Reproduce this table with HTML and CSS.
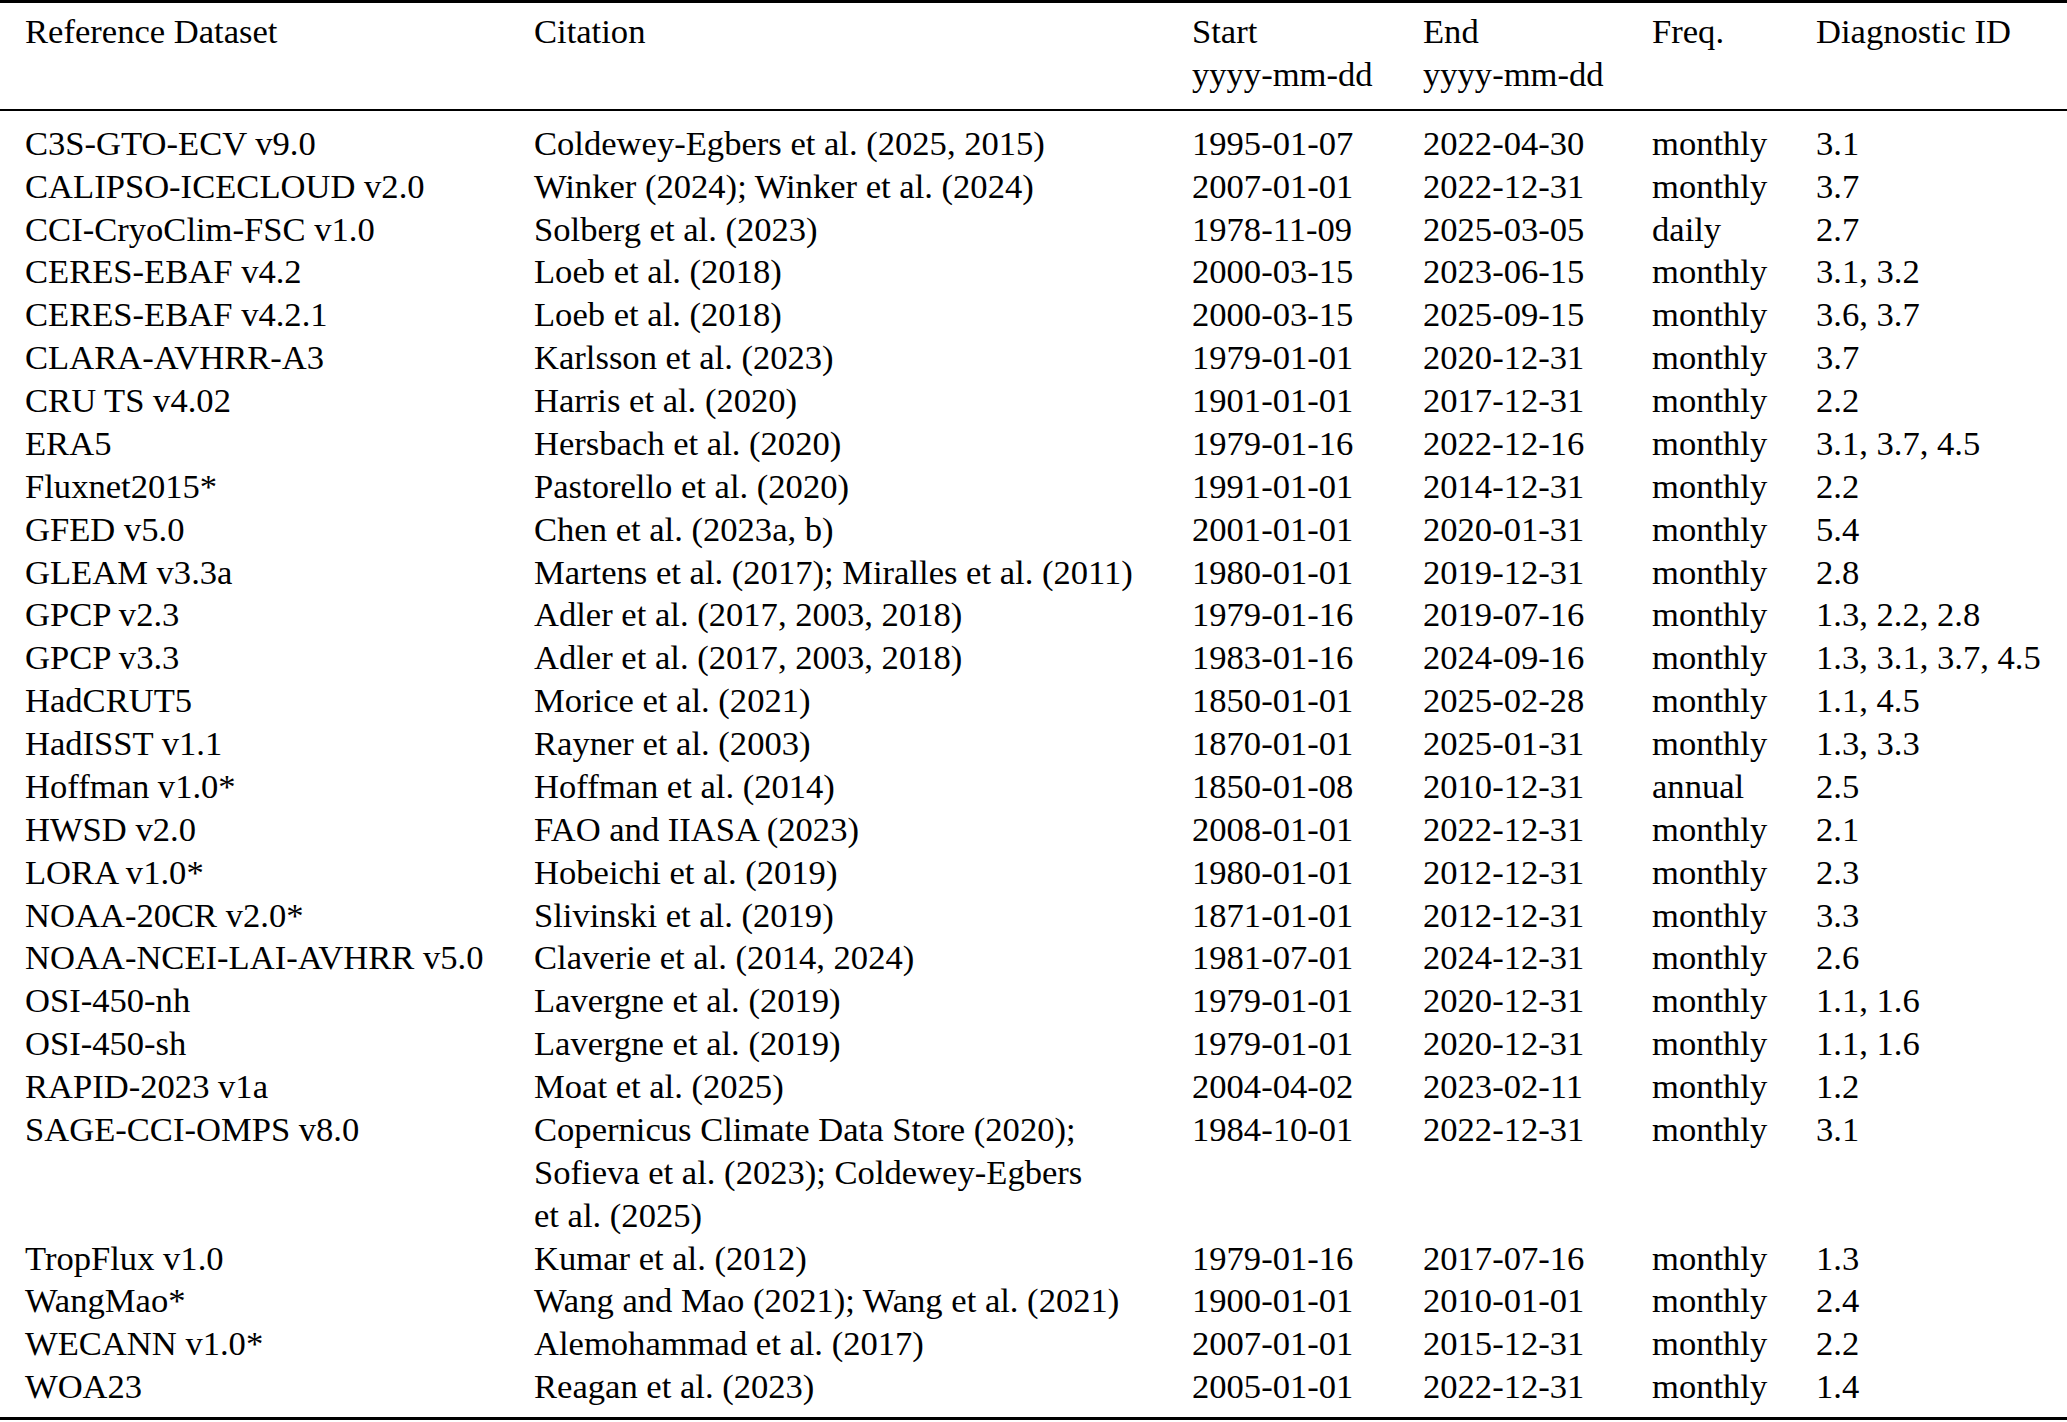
FILE: index.html
```html
<!DOCTYPE html>
<html lang="en">
<head>
<meta charset="utf-8">
<title>Reference datasets</title>
<link rel="stylesheet" href="styles.css">
</head>
<body>
<div class="tbl">
  <div class="head row">
    <div>Reference Dataset</div>
    <div>Citation</div>
    <div>Start<br>yyyy-mm-dd</div>
    <div>End<br>yyyy-mm-dd</div>
    <div>Freq.</div>
    <div>Diagnostic ID</div>
  </div>
  <div class="body">
    <div class="row"><div>C3S-GTO-ECV v9.0</div><div class="cite">Coldewey-Egbers et al. (2025, 2015)</div><div>1995-01-07</div><div>2022-04-30</div><div>monthly</div><div>3.1</div></div>
    <div class="row"><div>CALIPSO-ICECLOUD v2.0</div><div class="cite">Winker (2024); Winker et al. (2024)</div><div>2007-01-01</div><div>2022-12-31</div><div>monthly</div><div>3.7</div></div>
    <div class="row"><div>CCI-CryoClim-FSC v1.0</div><div class="cite">Solberg et al. (2023)</div><div>1978-11-09</div><div>2025-03-05</div><div>daily</div><div>2.7</div></div>
    <div class="row"><div>CERES-EBAF v4.2</div><div class="cite">Loeb et al. (2018)</div><div>2000-03-15</div><div>2023-06-15</div><div>monthly</div><div>3.1, 3.2</div></div>
    <div class="row"><div>CERES-EBAF v4.2.1</div><div class="cite">Loeb et al. (2018)</div><div>2000-03-15</div><div>2025-09-15</div><div>monthly</div><div>3.6, 3.7</div></div>
    <div class="row"><div>CLARA-AVHRR-A3</div><div class="cite">Karlsson et al. (2023)</div><div>1979-01-01</div><div>2020-12-31</div><div>monthly</div><div>3.7</div></div>
    <div class="row"><div>CRU TS v4.02</div><div class="cite">Harris et al. (2020)</div><div>1901-01-01</div><div>2017-12-31</div><div>monthly</div><div>2.2</div></div>
    <div class="row"><div>ERA5</div><div class="cite">Hersbach et al. (2020)</div><div>1979-01-16</div><div>2022-12-16</div><div>monthly</div><div>3.1, 3.7, 4.5</div></div>
    <div class="row"><div>Fluxnet2015*</div><div class="cite">Pastorello et al. (2020)</div><div>1991-01-01</div><div>2014-12-31</div><div>monthly</div><div>2.2</div></div>
    <div class="row"><div>GFED v5.0</div><div class="cite">Chen et al. (2023a, b)</div><div>2001-01-01</div><div>2020-01-31</div><div>monthly</div><div>5.4</div></div>
    <div class="row"><div>GLEAM v3.3a</div><div class="cite">Martens et al. (2017); Miralles et al. (2011)</div><div>1980-01-01</div><div>2019-12-31</div><div>monthly</div><div>2.8</div></div>
    <div class="row"><div>GPCP v2.3</div><div class="cite">Adler et al. (2017, 2003, 2018)</div><div>1979-01-16</div><div>2019-07-16</div><div>monthly</div><div>1.3, 2.2, 2.8</div></div>
    <div class="row"><div>GPCP v3.3</div><div class="cite">Adler et al. (2017, 2003, 2018)</div><div>1983-01-16</div><div>2024-09-16</div><div>monthly</div><div>1.3, 3.1, 3.7, 4.5</div></div>
    <div class="row"><div>HadCRUT5</div><div class="cite">Morice et al. (2021)</div><div>1850-01-01</div><div>2025-02-28</div><div>monthly</div><div>1.1, 4.5</div></div>
    <div class="row"><div>HadISST v1.1</div><div class="cite">Rayner et al. (2003)</div><div>1870-01-01</div><div>2025-01-31</div><div>monthly</div><div>1.3, 3.3</div></div>
    <div class="row"><div>Hoffman v1.0*</div><div class="cite">Hoffman et al. (2014)</div><div>1850-01-08</div><div>2010-12-31</div><div>annual</div><div>2.5</div></div>
    <div class="row"><div>HWSD v2.0</div><div class="cite">FAO and IIASA (2023)</div><div>2008-01-01</div><div>2022-12-31</div><div>monthly</div><div>2.1</div></div>
    <div class="row"><div>LORA v1.0*</div><div class="cite">Hobeichi et al. (2019)</div><div>1980-01-01</div><div>2012-12-31</div><div>monthly</div><div>2.3</div></div>
    <div class="row"><div>NOAA-20CR v2.0*</div><div class="cite">Slivinski et al. (2019)</div><div>1871-01-01</div><div>2012-12-31</div><div>monthly</div><div>3.3</div></div>
    <div class="row"><div>NOAA-NCEI-LAI-AVHRR v5.0</div><div class="cite">Claverie et al. (2014, 2024)</div><div>1981-07-01</div><div>2024-12-31</div><div>monthly</div><div>2.6</div></div>
    <div class="row"><div>OSI-450-nh</div><div class="cite">Lavergne et al. (2019)</div><div>1979-01-01</div><div>2020-12-31</div><div>monthly</div><div>1.1, 1.6</div></div>
    <div class="row"><div>OSI-450-sh</div><div class="cite">Lavergne et al. (2019)</div><div>1979-01-01</div><div>2020-12-31</div><div>monthly</div><div>1.1, 1.6</div></div>
    <div class="row"><div>RAPID-2023 v1a</div><div class="cite">Moat et al. (2025)</div><div>2004-04-02</div><div>2023-02-11</div><div>monthly</div><div>1.2</div></div>
    <div class="row"><div>SAGE-CCI-OMPS v8.0</div><div class="cite">Copernicus Climate Data Store (2020); Sofieva et&nbsp;al. (2023); Coldewey-Egbers et&nbsp;al. (2025)</div><div>1984-10-01</div><div>2022-12-31</div><div>monthly</div><div>3.1</div></div>
    <div class="row"><div>TropFlux v1.0</div><div class="cite">Kumar et al. (2012)</div><div>1979-01-16</div><div>2017-07-16</div><div>monthly</div><div>1.3</div></div>
    <div class="row"><div>WangMao*</div><div class="cite">Wang and Mao (2021); Wang et al. (2021)</div><div>1900-01-01</div><div>2010-01-01</div><div>monthly</div><div>2.4</div></div>
    <div class="row"><div>WECANN v1.0*</div><div class="cite">Alemohammad et al. (2017)</div><div>2007-01-01</div><div>2015-12-31</div><div>monthly</div><div>2.2</div></div>
    <div class="row"><div>WOA23</div><div class="cite">Reagan et al. (2023)</div><div>2005-01-01</div><div>2022-12-31</div><div>monthly</div><div>1.4</div></div>
  </div>
</div>
</body>
</html>
```

FILE: styles.css
```css
html, body {
  margin: 0;
  padding: 0;
  background: #ffffff;
}

body {
  font-family: "Liberation Serif", "Times New Roman", serif;
  font-size: 34.6px;
  line-height: 42.87px;
  color: #000000;
  width: 2067px;
}

.tbl {
  border-top: 3px solid #000;
  border-bottom: 3px solid #000;
}

.row {
  display: grid;
  grid-template-columns: 509px 658px 231px 229px 164px auto;
  padding-left: 25px;
  white-space: nowrap;
}

.head {
  padding-top: 7px;
  padding-bottom: 13px;
  border-bottom: 2px solid #000;
}

.body {
  padding-top: 11px;
  padding-bottom: 9px;
}

.cite {
  white-space: normal;
  padding-right: 46px;
}
```
